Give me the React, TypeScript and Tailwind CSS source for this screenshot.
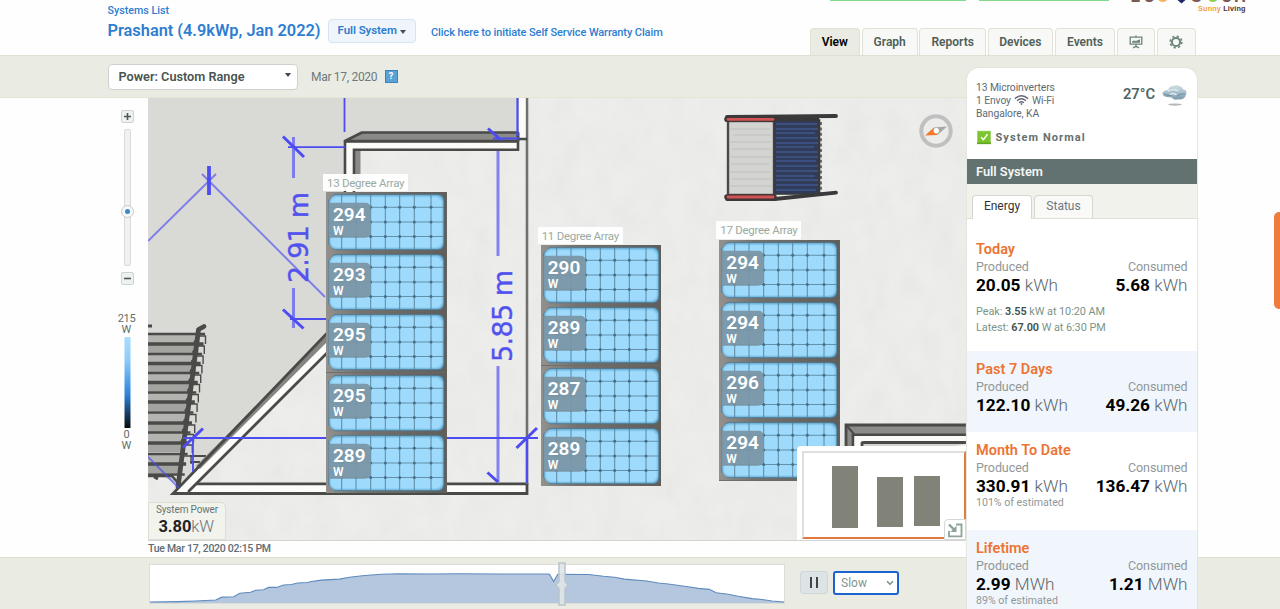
import React from "react";
import { ChevronDown } from "lucide-react";

const INK = "#4a4a48";
const BLUE = "#4c4cf2";

function Panel({ watts }: { watts: number }) {
  const cols = [15.7, 30, 44.7, 59.3, 73.7, 88.3, 105];
  const rows = [15.3, 30, 44.5];
  return (
    <div className="relative h-[60.2px] w-full">
      <svg viewBox="0 0 120.5 60.2" preserveAspectRatio="none" className="block h-full w-full">
        <rect width="120.5" height="60.2" fill="url(#frame)" />
        <path d="M8.500 2.400H112Q118 2.400 118 9V51Q118 57.800 112 57.800H8.500L2.600 51.500V8.500Z" fill="#5c9dc2" stroke="#4d7187" strokeWidth=".6" />
        <rect x="3.600" y="3.600" width="113.500" height="53.200" rx="6.500" fill="#84c8ee" />
        <rect x="5" y="5.200" width="110.600" height="50.200" rx="6" fill="#9edafc" />
        {cols.map((x) => (
          <path key={x} d={`M${x} 2.500V57.600`} stroke="#547f97" strokeWidth=".9" />
        ))}
        {rows.map((y) => (
          <path key={y} d={`M2.600 ${y}H118`} stroke="#547f97" strokeWidth=".8" />
        ))}
        {cols.map((x) => rows.map((y) => <circle key={`${x}-${y}`} cx={x} cy={y} r="1.500" fill="#476f86" />))}
        <path d="M2.600 10.700H39Q44.700 10.700 44.700 16.500V40Q44.700 45.700 39 45.700H2.600Z" fill="#7a97a6" fillOpacity=".95" />
      </svg>
      <div className="absolute left-[7px] top-[14px] text-white">
        <div className="h-[18px] text-[19px] font-semibold leading-[18px]">{watts}</div>
        <div className="mt-[1px] text-[12px] font-semibold leading-[12px]">W</div>
      </div>
    </div>
  );
}

function Array({ name, watts, place }: { name: string; watts: number[]; place: string }) {
  return (
    <div className={`absolute w-[120.5px] ${place}`}>
      <div className="-ml-[3px] mb-[1px] h-[17.500px] w-[85px] whitespace-nowrap bg-white/95 pl-[4px] text-[11.500px] leading-[18px] tracking-[-0.280px] text-[#9aaba2]">
        {name}
      </div>
      <div className="bg-[#6a6966]">
        {watts.map((w, i) => (
          <Panel key={i} watts={w} />
        ))}
      </div>
    </div>
  );
}

function SitePlan() {
  const slats = [334, 344, 354, 363.5, 373, 382.5, 392.5, 402, 412.5, 423, 432.5, 443, 454, 464, 474.5];
  return (
    <svg viewBox="148 98 818 442" preserveAspectRatio="none" className="block h-full w-full">
      <defs>
        <linearGradient id="frame" x1="0" x2="1">
          <stop offset="0" stopColor="#92918e" />
          <stop offset=".3" stopColor="#73726f" />
          <stop offset="1" stopColor="#5f5e5b" />
        </linearGradient>
        <filter id="plaster" x="0" y="0" width="100%" height="100%">
          <feTurbulence type="fractalNoise" baseFrequency=".045 .03" numOctaves="4" seed="4" />
          <feColorMatrix values="0 0 0 0 .55  0 0 0 0 .55  0 0 0 0 .54  .35 .35 0 0 -.25" />
        </filter>
      </defs>
      <rect x="148" y="98" width="818" height="443" fill="#ededec" />
      <rect x="148" y="98" width="818" height="443" filter="url(#plaster)" opacity=".4" />
      <path d="M148 98H519V134L362 133L345 142V318L180 485L148 470Z" fill="#d9d9d6" />

      <g stroke={INK} fill="none">
        {slats.slice(0, 14).map((y, i) => (
          <rect key={y} x="148" y={y} width={52 - i * 1.4} height="9" fill={i % 2 ? "#a3a3a0" : "#b3b3b0"} stroke="none" />
        ))}
        {slats.map((y, i) => (
          <path key={y} d={`M148 ${y}H${205 - i * 1.45}`} strokeWidth={i % 2 ? 3.6 : 2.6} />
        ))}
        {slats.slice(0, 13).map((y, i) => (
          <path key={y} d={`M${199 - i * 1.4} ${y + 2}H${205.5 - i * 1.2}V${y + 10}`} strokeWidth="1.4" />
        ))}
        <path d="M204 326.500L198.500 329.500L178 487" strokeWidth="4.800" strokeLinecap="round" strokeLinejoin="round" />
        {slats.slice(1, 12).map((y, i) => (
          <circle key={y} cx={196 - i * 1.3} cy={y - 2} r="2" fill={INK} />
        ))}
        <path d="M148 326h4" strokeWidth="3" />
        <path d="M148 476H172L178 483M154 477l4 2" strokeWidth="2.600" />
        <path d="M190 456h16M190 462h10" strokeWidth="2.200" />
      </g>

      <path d="M345 315L173 492L190 492L345 337Z" fill="#fcfcfa" />
      <path d="M345 317L196 466L200 469L345 324Z" fill="#858582" />
      <path d="M200 484H527V493H178Z" fill="#fcfcfb" />
      <g stroke={INK} strokeWidth="2.800" fill="none" strokeLinecap="round">
        <path d="M345 314.500L173 493.500H527V484" />
        <path d="M345 335L189 491" />
        <path d="M197 483.800H527" />
      </g>
      <path d="M527 98V484" stroke="#70706e" strokeWidth="2.600" />
      <rect x="519" y="98" width="6.500" height="40" fill="#fbfbfa" />
      <path d="M362 132.500H518V141H345Z" fill="#8a8a87" stroke={INK} strokeWidth="2.600" strokeLinejoin="round" />
      <path d="M345.500 142.500H518V149.500H354V200H345.500Z" fill="#fbfbfa" />
      <rect x="354" y="150" width="6.500" height="40" fill="#8a8a87" />
      <path d="M345 200V141.500H518V149.800H354V200M518 133V141M518 139H527" fill="none" stroke={INK} strokeWidth="2.600" />

      <path d="M846 470V425H970V435H853V470" fill="#8b8b88" stroke={INK} strokeWidth="2.800" />
      <path d="M854.500 470V436H970V441H862V470" fill="#fafaf9" />
      <path d="M846 425L854 434" stroke={INK} strokeWidth="2" />
      <path d="M862 470V443.500Q862 442.500 864 442.500H970" fill="#d5d5d3" stroke={INK} strokeWidth="2.800" />

      <g>
        <rect x="728" y="121" width="46" height="74" fill="#d3d3d1" stroke={INK} strokeWidth="2.400" />
        <path d="M730 129h40M733 135h38M730 142h40M732 149h39M730 157h42M731 164h38M730 172h40M732 179h39M730 186h42" stroke="#bbbbb9" strokeWidth=".8" />
        <rect x="774.500" y="120" width="45" height="74" fill="#303c5a" stroke="#383a42" strokeWidth="1.600" />
        <path d="M776 124h41M776 129h42M776 133h39M776 138h42M776 143h42M776 147h38M776 152h42M776 157h42M776 161h40M776 166h42M776 171h42M776 176h39M776 180h42M776 185h42M776 190h40" stroke="#4764a4" strokeWidth="1.100" />
        <path d="M819 121V194" stroke="#3a3a3a" strokeWidth="2" />
        <path d="M821 122V194" stroke="#444" strokeWidth="1.500" strokeDasharray="3 2.400" />
        <path d="M727 116.800L836 116M727 199L775 199L836 192.700" stroke="#3a3a3a" strokeWidth="3.800" strokeLinecap="round" fill="none" />
        <path d="M775 119.500H819" stroke="#383838" strokeWidth="3.600" />
        <path d="M727 119.300H774M727 197H774" stroke="#423535" strokeWidth="5.600" strokeLinecap="round" />
        <path d="M728 119.300H773M728 197H773" stroke="#d15355" strokeWidth="2.800" strokeLinecap="round" />
      </g>

      <g stroke={BLUE} fill="none">
        <g strokeWidth="1.900" strokeOpacity=".65">
          <path d="M148 241L216 174M202 174L325 297M148 457L179 488" />
          <path d="M293.500 137V178M293.500 288V328M498 151V256M498 366V482" strokeWidth="3" />
        </g>
        <path d="M344.500 98V132M288 147.200H345M290 319H326M183 438H326M445 438H538M193 438V472M493 138.500H519" strokeWidth="1.800" />
        <path d="M517.500 98V136M527 438V483" strokeWidth="2.200" />
        <path d="M283 136.500L304 157M283 309.500L303.500 328.500M183 447.500L203 428.500M516.500 448L537 428M488 128.500L501 140M487.500 472.500L498 482" strokeWidth="3" />
        <path d="M209 166V195" strokeWidth="3.800" />
      </g>
      <g fill="#5252ee" stroke="#5252ee" strokeWidth=".4" fontFamily="DejaVu Sans, sans-serif" fontSize="27">
        <text transform="translate(307.500 283) rotate(-90)" textLength="91">2.91 m</text>
        <text transform="translate(512 362) rotate(-90)" textLength="92">5.85 m</text>
      </g>
    </svg>
  );
}

function Compass() {
  return (
    <svg viewBox="0 0 34 34" className="absolute left-[770.500px] top-[15.500px] h-[34px] w-[34px]">
      <circle cx="17" cy="17" r="14.700" fill="#ececeb" stroke="#c0c0c0" strokeWidth="4" />
      <path d="M6 21.500L15 13.500L18.500 21Z" fill="#f07a2c" />
      <path d="M15 13.500L28 12.500L18.500 21Z" fill="#a4a7a6" />
      <circle cx="17.300" cy="16.800" r="2.700" fill="#fff" />
    </svg>
  );
}

function MiniMap() {
  return (
    <div className="absolute bottom-0 right-0 h-[94px] w-[169px] rounded-tl-[4px] bg-white pl-[5px] pt-[5px]">
      <div className="relative flex h-[88px] w-full items-start border-2 border-b-[#e0773f] border-l-[#dedede] border-r-[#e0773f] border-t-[#dedede] pl-[28px]">
        <div className="mt-[13px] h-[62px] w-[26px] bg-[#818378]" />
        <div className="ml-[19px] mt-[24px] h-[50px] w-[25.500px] bg-[#818378]" />
        <div className="ml-[11.500px] mt-[23px] h-[50px] w-[25.500px] bg-[#818378]" />
      </div>
      <div className="absolute bottom-0 right-0 h-[21px] w-[22px] rounded-tl-[4px] border border-[#d3d8d4] bg-white p-[2px]">
        <svg viewBox="0 0 16 16" className="h-[16px] w-[16px]" fill="none" stroke="#8ba398" strokeWidth="1.800">
          <path d="M2 9V14.300H14.500V2.500H9" />
          <path d="M2 2.500L8 8.500" strokeWidth="2.400" />
          <path d="M9.500 3.500V10H3.500Z" fill="#8ba398" stroke="none" />
        </svg>
      </div>
    </div>
  );
}

function ZoomRail() {
  const key =
    "flex h-[13px] w-[13px] items-center justify-center rounded-[2px] border border-[#ccd3d5] bg-[#edf1f2]";
  return (
    <div className="ml-[107px] flex w-[41px] flex-col items-center pt-[12px] text-[11px] leading-[11px] text-[#5e6e6a]">
      <div className={key}>
        <svg viewBox="0 0 9 9" className="h-[9px] w-[9px]" stroke="#555" strokeWidth="1.600">
          <path d="M1 4.500H8M4.500 1V8" />
        </svg>
      </div>
      <div className="relative mt-[6px] h-[137px] w-[7px] rounded-[2px] border border-[#d8dadb] bg-[#f0f1f1]">
        <div className="absolute -left-[4px] top-[75px] flex h-[13px] w-[13px] items-center justify-center rounded-full border border-[#c6c9cb] bg-[#f7f8f8]">
          <div className="h-[5px] w-[5px] rounded-full bg-[#3f86c7]" />
        </div>
      </div>
      <div className={`mt-[6px] ${key}`}>
        <svg viewBox="0 0 9 9" className="h-[9px] w-[9px]" stroke="#555" strokeWidth="1.600">
          <path d="M1 4.500H8" />
        </svg>
      </div>
      <div className="mt-[28px] w-full -translate-x-[1px] text-center tracking-[-0.400px]">215</div>
      <div className="-translate-x-[1px]">W</div>
      <div className="mt-[2px] h-[91px] w-[6px] -translate-x-[0.500px] bg-[linear-gradient(#a9defb,#8fcdf6_25%,#3f93e6_55%,#2b7fd0_65%,#132a45_90%,#0a0a0a)]" />
      <div className="mt-[1px] -translate-x-[1px]">0</div>
      <div className="-translate-x-[1px]">W</div>
    </div>
  );
}

function Timeline() {
  const line =
    "M0 38L28 37.600L46 37L66 36L72 33L84 32.500L90 29L101 28L106 26L114 25.500L119 23L127 23L134 20.500L142 20L148 18.500L158 18L162 17L172 15.500L190 14.500L200 12.500L213 11L232 9.500L250 9L280 9.300L310 9L350 9.300L400 9.300L401 10L405 17L409 9.500L440 9.700L455 11.500L466 12.500L476 14.500L498 16.500L510 18.500L520 19.500L538 22L550 24L561 25L568 28.500L580 30L590 32L604 34.500L614 35.500L624 37L636 38";
  return (
    <div className="relative ml-[149px] mt-[6px] h-[40px] w-[636px] border border-[#dcddd6] bg-white">
      <svg viewBox="0 0 636 39" preserveAspectRatio="none" className="block h-full w-full">
        <path d={`${line}V39H0Z`} fill="#b4c7df" />
        <path d={line} fill="none" stroke="#5e8bbb" strokeWidth="1.100" />
      </svg>
      <svg viewBox="0 0 16 46" className="absolute left-[404px] top-[-4px] h-[46px] w-[16px]">
        <path d="M5 2H11V20Q11 21.500 14.500 24Q11 26.500 11 28V44H5V28Q5 26.500 1.500 24Q5 21.500 5 20Z" fill="#dfe5e8" fillOpacity=".9" stroke="#b9c5ca" strokeWidth="1.500" />
      </svg>
    </div>
  );
}

function Stat({ value, unit }: { value: string; unit: string }) {
  return (
    <span>
      <b className="font-bold text-black">{value}</b> <span className="font-light text-[#5c6870]">{unit}</span>
    </span>
  );
}

type PeriodProps = {
  title: string;
  made: string;
  used: string;
  unit: string;
  note?: string;
  box: string;
  children?: React.ReactNode;
};

function Period({ title, made, used, unit, note, box, children }: PeriodProps) {
  return (
    <section className={`pl-[9px] pr-[9.500px] ${box}`}>
      <h3 className="relative top-[0.500px] text-[14.500px] font-semibold leading-[18px] text-[#ec7434]">{title}</h3>
      <div className="flex justify-between text-[12.500px] leading-[18px] tracking-[-0.080px] text-[#90979a]">
        <span>Produced</span>
        <span>Consumed</span>
      </div>
      <div className="flex justify-between text-[17.200px] leading-[18px]">
        <Stat value={made} unit={unit} />
        <Stat value={used} unit={unit} />
      </div>
      {note && <div className="text-[10.600px] leading-[16px] text-[#90979a]">{note}</div>}
      {children}
    </section>
  );
}

function Sidebar() {
  return (
    <aside className="z-10 col-start-2 row-span-2 row-start-1 -mt-[30px] flex flex-col overflow-hidden rounded-t-[12px] bg-white shadow-[0_0_1px_1px_#e3e4d9]">
      <div className="flex h-[91px] shrink-0 justify-between px-[9px] pt-[12.500px]">
        <div>
          <div className="text-[10.300px] leading-[13.200px] tracking-[-0.080px] text-[#5d6b73]">
            <div>13 Microinverters</div>
            <div className="flex items-center">
              1 Envoy
              <svg viewBox="0 0 16 12" className="mx-[3px] h-[12px] w-[15px]" fill="none" stroke="#667" strokeWidth="1.500">
                <path d="M1 4.500Q8 -1.500 15 4.500M3.300 6.800Q8 2.700 12.700 6.800M5.500 9Q8 6.900 10.500 9" />
                <path d="M6.700 10L8 11.500L9.300 10L8 9.300Z" fill="#667" stroke="none" />
              </svg>
              Wi-Fi
            </div>
            <div>Bangalore, KA</div>
          </div>
          <div className="mt-[10px] flex items-center gap-[4.500px] text-[11px] font-bold leading-[15px] tracking-[1.080px] text-[#66706f]">
            <svg viewBox="0 0 14 14" className="ml-[1px] h-[14px] w-[14px] -translate-y-[0.500px]">
              <rect x=".5" y=".5" width="13" height="13" fill="#7ac62c" stroke="#a2d178" />
              <rect y="12" width="14" height="1.500" fill="#62a622" />
              <path d="M4 6.800L6.400 9.200L10.500 3.800" fill="none" stroke="#fff" strokeWidth="1.500" />
            </svg>
            System Normal
          </div>
        </div>
        <div className="flex h-[28px] items-center gap-[7px]">
          <span className="text-[14.700px] font-semibold text-[#4f6561]">27°C</span>
          <svg viewBox="0 0 26 24" className="mr-[1px] h-[24px] w-[25px]">
            <defs>
              <linearGradient id="cloud" x2="0" y2="1">
                <stop offset="0" stopColor="#d4dfe5" />
                <stop offset=".5" stopColor="#a9bfcb" />
                <stop offset="1" stopColor="#7799aa" />
              </linearGradient>
            </defs>
            <path d="M5 14Q0 13.500 .5 9.500Q3 6.500 6.500 6.500Q8 2.500 12 2.500Q16 .5 20 3.500Q21.500 4.500 22 6Q26 7 25.500 10Q25 12.500 24 14Q21 17.500 17 16.500Q13 18 10 14.500Z" fill="url(#cloud)" />
            <path d="M6 8Q11 5 17 7.500M8 11.500Q12 9.500 15 12" fill="none" stroke="#e6eef2" strokeWidth="1.300" />
            <path d="M2 11Q6 13 10 12.500M16 13Q20 10 24 11" fill="none" stroke="#6d91a5" strokeWidth="1.100" />
            <ellipse cx="13.500" cy="22" rx="7" ry="1.100" fill="#b5b8b8" />
          </svg>
        </div>
      </div>
      <h2 className="h-[25px] shrink-0 bg-[#617270] px-[9px] text-[12.800px] font-semibold leading-[25px] text-[#f5f7f5]">Full System</h2>
      <div className="flex h-[35px] shrink-0 items-end gap-[2px] border-b border-[#dfe0d6] bg-[#f1f2ec] pl-[5px] text-[12px]">
        <div className="-mb-px h-[24px] w-[60px] rounded-t-[4px] border border-b-0 border-[#d5d6cd] bg-white text-center leading-[21px] text-[#333]">Energy</div>
        <div className="h-[23px] w-[59px] rounded-t-[4px] border border-b-0 border-[#d5d6cd] bg-[#f9f9f8] text-center leading-[21px] text-[#6b7780]">Status</div>
      </div>
      <Period title="Today" made="20.05" used="5.68" unit="kWh" box="h-[132px] shrink-0 pt-[21px]">
        <div className="mt-[10px] text-[10.900px] leading-[16px] tracking-[-0.050px] text-[#7b9489]">
          <div>
            Peak: <b className="font-semibold text-[#41504b]">3.55</b> kW at 10:20 AM
          </div>
          <div>
            Latest: <b className="font-semibold text-[#41504b]">67.00</b> W at 6:30 PM
          </div>
        </div>
      </Period>
      <Period title="Past 7 Days" made="122.10" used="49.26" unit="kWh" box="h-[81px] shrink-0 bg-[#f0f6fb] pt-[9px]" />
      <Period title="Month To Date" made="330.91" used="136.47" unit="kWh" note="101% of estimated" box="h-[98px] shrink-0 pt-[9px]" />
      <Period title="Lifetime" made="2.99" used="1.21" unit="MWh" note="89% of estimated" box="h-[98px] shrink-0 bg-[#f0f6fb] pt-[9px]" />
    </aside>
  );
}

function Logo() {
  return (
    <svg viewBox="0 0 120 14" className="absolute left-[1128px] top-0 h-[14px] w-[120px]">
      <g fontFamily="Roboto, sans-serif" fontWeight="700" fontSize="17" fill="#7d5854">
        <text x="2.500" y="1.500">E</text>
        <text x="15.500" y="1.500">C</text>
        <text x="29" y="1.500" fill="#f3b45a">O</text>
        <text x="63" y="1.500">S</text>
        <text x="79" y="1.500" fill="#8fd14f">O</text>
        <text x="93" y="1.500">C</text>
        <text x="106" y="1.500">H</text>
      </g>
      <path d="M49.500 0H57.500L53.500 3.500Z" fill="#1d2769" />
      <text x="70" y="10.500" fontFamily="Liberation Sans, sans-serif" fontWeight="700" fontSize="7.300" textLength="47.500" fill="#4b3330">
        <tspan fill="#f2a03f">Sunny</tspan> Living
      </text>
    </svg>
  );
}

function Tabs() {
  const tab = "h-[27px] rounded-t-[4px] border border-b-0 border-[#e1e2d5] bg-[#f8f8f6] text-center leading-[26px]";
  return (
    <nav className="ml-[147.500px] mt-[28px] flex gap-[1.700px] text-[12px] font-semibold text-[#4f6059]">
      <div className="h-[28px] w-[50.500px] rounded-t-[4px] border border-b-0 border-[#e1e2d5] bg-[#eaebe3] text-center leading-[26px] text-black">View</div>
      <div className={`w-[56px] ${tab}`}>Graph</div>
      <div className={`w-[66.500px] ${tab}`}>Reports</div>
      <div className={`w-[65.500px] ${tab}`}>Devices</div>
      <div className={`w-[60.500px] ${tab}`}>Events</div>
      <div className={`flex w-[38px] items-center justify-center ${tab}`}>
        <svg viewBox="0 0 14 14" className="h-[14px] w-[14px]" fill="none" stroke="#6d847c" strokeWidth="1.300">
          <path d="M.5 2.200H13.500M1.200 2.500V9.200H12.800V2.500M7 .5V2M7 9V12.500M4 13L7 11L10 13" />
          <path d="M3 7.800V6.500L5 5.500L7 6L11 4.200V7.800Z" fill="#6d847c" stroke="none" />
        </svg>
      </div>
      <div className={`flex w-[39px] items-center justify-center ${tab}`}>
        <svg viewBox="0 0 14 14" className="h-[14px] w-[14px]" fill="none" stroke="#6d847c">
          <circle cx="7" cy="7" r="4.100" strokeWidth="2" />
          <circle cx="7" cy="7" r="5.800" strokeWidth="1.600" strokeDasharray="2.240 2.315" />
        </svg>
      </div>
    </nav>
  );
}

export default function App() {
  return (
    <div className="relative flex h-[609px] w-[1280px] flex-col overflow-hidden bg-[#fefefe] font-[Roboto,'Open_Sans',sans-serif]">
      <header className="flex h-[55px] shrink-0 pl-[107.500px] text-[#2e7dd1]">
        <div className="flex w-[212px] flex-col whitespace-nowrap">
          <div className="mt-[4px] text-[10.700px] font-medium leading-[13px]">Systems List</div>
          <div className="mt-[3.500px] text-[16.350px] font-semibold leading-[20px]">Prashant (4.9kWp, Jan 2022)</div>
        </div>
        <button className="ml-[8px] mt-[19px] flex h-[24px] w-[88px] items-center justify-center gap-[4.500px] rounded-[4px] border border-[#d5e4f0] bg-[#eff5fa] text-[11.500px] font-semibold tracking-[-0.080px]">
          <span className="translate-x-[1px]">Full System</span>
          <span className="mt-[1px] border-x-[3.500px] border-t-[4px] border-x-transparent border-t-[#40505a]" />
        </button>
        <a className="ml-[15.500px] mt-[25px] w-[231px] whitespace-nowrap text-[11px] font-medium leading-[15px] tracking-[-0.100px]">Click here to initiate Self Service Warranty Claim</a>
        <Tabs />
      </header>
      <div className="absolute left-[830px] top-0 h-px w-[136px] bg-[#82d98a]" />
      <div className="absolute left-[979px] top-0 h-px w-[130px] bg-[#82d98a]" />
      <Logo />

      <div className="flex h-[43px] shrink-0 items-center border-y border-b-[#e4e6d4] border-t-[#dfe0d4] bg-[#eaebe3] pl-[107.500px]">
        <div className="flex h-[26px] w-[190.500px] items-center justify-between rounded-[4px] border-[1.500px] border-[#cfd1cc] bg-white pl-[10px] pr-[6px] text-[12.700px] font-semibold text-[#4a5450]">
          Power: Custom Range
          <span className="-mt-[3px] border-x-[3.500px] border-t-[4px] border-x-transparent border-t-[#444]" />
        </div>
        <span className="ml-[13px] w-[66px] whitespace-nowrap text-[12px] tracking-[-0.300px] text-[#6e7a7c]">Mar 17, 2020</span>
        <span className="ml-[7.500px] flex h-[13px] w-[13px] items-center justify-center border border-[#3b83b8] bg-[#58a2d6] text-[9px] font-bold text-white">?</span>
      </div>

      <div className="grid shrink-0 grid-cols-[967px_230px_83px] grid-rows-[459px_52px]">
        <div className="flex">
          <ZoomRail />
          <div className="flex w-[819px] flex-col">
            <div className="relative h-[443px] w-[818px] shrink-0 overflow-hidden border-b border-[#d4d5d2]">
              <SitePlan />
              <Array name="13 Degree Array" watts={[294, 293, 295, 295, 289]} place="left-[178px] top-[75.500px]" />
              <Array name="11 Degree Array" watts={[290, 289, 287, 289]} place="left-[392.700px] top-[128.800px]" />
              <Array name="17 Degree Array" watts={[294, 294, 296, 294]} place="left-[571.300px] top-[123.300px]" />
              <Compass />
              <MiniMap />
              <div className="absolute bottom-0 left-0 h-[38px] w-[78px] rounded-tr-[5px] border border-[#dcddd3] bg-[#f2f3ed]">
                <div className="whitespace-nowrap text-center text-[10px] leading-[14px] tracking-[-0.150px] text-[#65756f]">System Power</div>
                <div className="pl-[9.500px] text-[16.500px] leading-[20px] tracking-[-0.100px]">
                  <b className="text-[#222]">3.80</b>
                  <span className="font-light text-[#6a747a]">kW</span>
                </div>
              </div>
            </div>
            <div className="text-[10.500px] font-medium leading-[15px] tracking-[-0.280px] text-[#5f6d76]">Tue Mar 17, 2020 02:15 PM</div>
          </div>
        </div>
        <div className="col-span-3 col-start-1 row-start-2 flex border-t border-[#dddfd0] bg-[#eaebe3]">
          <Timeline />
          <button className="ml-[15px] mt-[13px] flex h-[23px] w-[28px] items-center justify-center gap-[3.500px] rounded-[3px] border border-[#cfd6d8] bg-[#dde4e6]">
            <span className="h-[11px] w-[2.500px] bg-[#444]" />
            <span className="h-[11px] w-[2.500px] bg-[#444]" />
          </button>
          <div className="ml-[5px] mt-[13px] flex h-[24px] w-[66px] items-center justify-between rounded-[3px] border-2 border-[#1c63cf] bg-white pl-[6px] pr-[2px] text-[12px] text-[#7f968d]">
            Slow
            <ChevronDown className="h-[10px] w-[10px]" strokeWidth={4} />
          </div>
        </div>
        <Sidebar />
      </div>
      <div className="absolute right-0 top-[212px] h-[97px] w-[6px] rounded-l-[5px] bg-[#f07c3c]" />
    </div>
  );
}
